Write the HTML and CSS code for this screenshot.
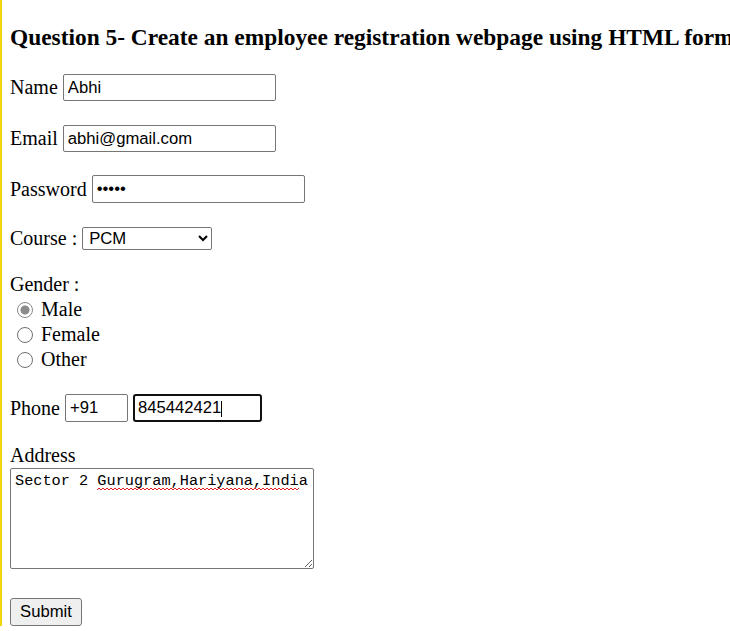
FILE: index.html
```html
<!DOCTYPE html>
<html lang="en">
<head>
<meta charset="utf-8">
<title>Employee Registration</title>
<link rel="stylesheet" href="styles.css">
</head>
<body>
<h3 class="title">Question 5- Create an employee registration webpage using HTML form</h3>
<form class="form">
  <div class="row row-name">
    <label class="lbl" for="name">Name</label>
    <input class="field field-wide" id="name" type="text" value="Abhi">
  </div>
  <div class="row row-email">
    <label class="lbl" for="email">Email</label>
    <input class="field field-wide" id="email" type="text" value="abhi@gmail.com">
  </div>
  <div class="row row-pass">
    <label class="lbl" for="pass">Password</label>
    <input class="field field-wide" id="pass" type="password" value="abcde">
  </div>
  <div class="row row-course">
    <label class="lbl" for="course">Course :</label>
    <select class="select" id="course">
      <option>PCM</option>
      <option>PCB</option>
      <option>Commerce</option>
    </select>
  </div>
  <div class="gender-label">Gender :</div>
  <div class="radios">
    <label class="radio-row"><input class="radio" type="radio" name="gender" checked><span>Male</span></label>
    <label class="radio-row"><input class="radio" type="radio" name="gender"><span>Female</span></label>
    <label class="radio-row"><input class="radio" type="radio" name="gender"><span>Other</span></label>
  </div>
  <div class="row row-phone">
    <label class="lbl" for="code">Phone</label>
    <input class="field field-code" id="code" type="text" value="+91">
    <span class="focus-wrap">
      <input class="field field-phone" id="phone" type="text" value="845442421">
      <span class="caret"></span>
    </span>
  </div>
  <label class="addr-label" for="addr">Address</label>
  <div class="area-wrap">
    <textarea class="area" id="addr">Sector 2 Gurugram,Hariyana,India</textarea>
    <svg class="spell" width="202" height="4" viewBox="0 0 202 4" aria-hidden="true">
      <path d="M0 3 L2 1 L4 3 L6 1 L8 3 L10 1 L12 3 L14 1 L16 3 L18 1 L20 3 L22 1 L24 3 L26 1 L28 3 L30 1 L32 3 L34 1 L36 3 L38 1 L40 3 L42 1 L44 3 L46 1 L48 3 L50 1 L52 3 L54 1 L56 3 L58 1 L60 3 L62 1 L64 3 L66 1 L68 3 L70 1 L72 3 L74 1 L76 3 L78 1 L80 3 L82 1 L84 3 L86 1 L88 3 L90 1 L92 3 L94 1 L96 3 L98 1 L100 3 L102 1 L104 3 L106 1 L108 3 L110 1 L112 3 L114 1 L116 3 L118 1 L120 3 L122 1 L124 3 L126 1 L128 3 L130 1 L132 3 L134 1 L136 3 L138 1 L140 3 L142 1 L144 3 L146 1 L148 3 L150 1 L152 3 L154 1 L156 3 L158 1 L160 3 L162 1 L164 3 L166 1 L168 3 L170 1 L172 3 L174 1 L176 3 L178 1 L180 3 L182 1 L184 3 L186 1 L188 3 L190 1 L192 3 L194 1 L196 3 L198 1 L200 3 L202 1" fill="none" stroke="#e02020" stroke-width="1"/>
    </svg>
  </div>
  <div class="actions">
    <button class="btn" type="button">Submit</button>
  </div>
</form>
</body>
</html>
```
FILE: styles.css
```css
html {
  background: #fff;
  border-left: 2px solid #f5d60a;
  overflow: hidden;
}

body {
  margin: 0 0 0 8px;
  font-family: "Liberation Serif", "Times New Roman", serif;
  font-size: 20px;
  color: #000;
}

.title {
  margin: 24px 0 0;
  font-size: 23.4px;
  line-height: 27px;
  font-weight: bold;
  white-space: nowrap;
}

.form {
  display: flex;
  flex-direction: column;
  align-items: flex-start;
  margin-top: 23px;
}

.row {
  display: flex;
  align-items: center;
  gap: 5px;
  height: 27px;
}

.row-email { margin-top: 24px; }
.row-pass { margin-top: 23px; height: 28px; }
.row-course { margin-top: 24px; height: 23px; }
.row-phone { margin-top: 22px; height: 28px; }

.lbl {
  line-height: 23px;
}

.field {
  box-sizing: border-box;
  height: 27px;
  margin: 0;
  padding: 1px 4px;
  border: 1px solid #767676;
  border-radius: 2px;
  font-family: "Liberation Sans", Arial, sans-serif;
  font-size: 16.67px;
  color: #000;
  background: #fff;
  outline: none;
}

.field-wide { width: 213px; }
.row-pass .field { height: 28px; }

.field-code {
  width: 63px;
  height: 28px;
}

.focus-wrap {
  position: relative;
  display: block;
}

.field-phone {
  display: block;
  width: 129px;
  height: 28px;
  padding: 1px 3px;
  border: 2px solid #101010;
  border-radius: 3px;
}

.caret {
  position: absolute;
  left: 88px;
  top: 7px;
  width: 1px;
  height: 16px;
  background: #000;
}

.select {
  box-sizing: border-box;
  width: 130px;
  height: 23px;
  margin: 0;
  padding: 0 2px;
  border: 1px solid #767676;
  border-radius: 2px;
  font-family: "Liberation Sans", Arial, sans-serif;
  font-size: 16.67px;
  color: #000;
  background: #fff;
}

.gender-label {
  margin-top: 23px;
  line-height: 23px;
}

.radios {
  display: flex;
  flex-direction: column;
  margin-top: 1px;
}

.radio-row {
  display: flex;
  align-items: center;
  height: 25px;
  line-height: 25px;
}

.radio {
  appearance: none;
  -webkit-appearance: none;
  box-sizing: border-box;
  width: 16px;
  height: 16px;
  margin: 0 8px 0 7px;
  border: 1px solid #6f6f6f;
  border-radius: 50%;
  background: #fff;
}

.radio:checked {
  border-color: #8a8a8a;
  background: radial-gradient(circle, #8c8c8c 0 4.2px, #fff 4.9px);
}

.addr-label {
  display: block;
  margin-top: 22px;
  line-height: 23px;
}

.area-wrap {
  position: relative;
  margin-top: 1px;
}

.area {
  display: block;
  box-sizing: border-box;
  width: 304px;
  height: 101px;
  margin: 0;
  padding: 3px 4px 2px;
  border: 1px solid #767676;
  border-radius: 2px;
  font-family: "Liberation Mono", "Courier New", monospace;
  font-size: 15.25px;
  line-height: 18px;
  color: #000;
  background: #fff;
  outline: none;
}

.spell {
  position: absolute;
  left: 87px;
  top: 19px;
}

.actions {
  margin-top: 29px;
}

.btn {
  box-sizing: border-box;
  width: 72px;
  height: 28px;
  margin: 0;
  padding: 0;
  border: 1px solid #767676;
  border-radius: 3px;
  background: #efefef;
  font-family: "Liberation Sans", Arial, sans-serif;
  font-size: 16.67px;
  color: #000;
}
```
